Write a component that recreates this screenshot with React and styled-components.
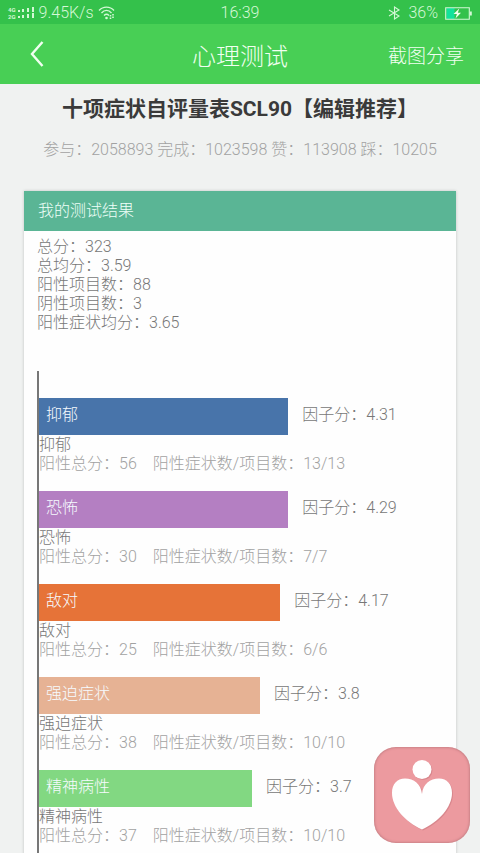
import styled, { createGlobalStyle } from 'styled-components';

const colors = {
  status: '#34c14b',
  header: '#48cf55',
  page: '#f0f2f1',
  card: '#fefefe',
  cardHead: '#5ab595',
  title: '#3a3a3a',
  text: '#777777',
  muted: '#a2a2a2',
  axis: '#777777',
  badge: '#ec9a9f',
};

const GlobalStyle = createGlobalStyle`
  * {
    box-sizing: border-box;
  }

  body {
    margin: 0;
    font-family: Roboto, 'Noto Sans CJK SC', sans-serif;
    font-size: 16px;
    font-weight: 300;
    background: ${colors.page};
    color: ${colors.text};
  }

  h1, h2, h3, p, ul {
    margin: 0;
    padding: 0;
  }
`;

const Screen = styled.div`
  display: flex;
  flex-direction: column;
  height: 100vh;
`;

const StatusBar = styled.div`
  display: grid;
  grid-template-columns: 1fr auto 1fr;
  align-items: center;
  height: 24px;
  flex: none;
  padding: 2px 8px 0;
  background: ${colors.status};
  color: #d4f8d6;
  line-height: 22px;
`;

const StatusGroup = styled.div`
  display: flex;
  align-items: center;
  justify-content: ${({ $end }) => ($end ? 'flex-end' : 'flex-start')};
  gap: ${({ $end }) => ($end ? '7px' : '4px')};
`;

const NetLabel = styled.span`
  display: flex;
  flex-direction: column;
  font-size: 6px;
  font-weight: 700;
  line-height: 7px;
`;

const Network = styled.div`
  display: flex;
  align-items: center;
  gap: 2px;
`;

const AppBar = styled.header`
  display: grid;
  grid-template-columns: 1fr auto 1fr;
  align-items: center;
  height: 60px;
  flex: none;
  padding: 0 16px;
  background: ${colors.header};
  color: #f1fff1;
`;

const BarButton = styled.button`
  display: flex;
  align-items: center;
  justify-self: ${({ $end }) => ($end ? 'end' : 'start')};
  padding: ${({ $end }) => ($end ? '0' : '0 12px')};
  border: 0;
  background: none;
  color: inherit;
  font: inherit;
  font-size: 19px;
  cursor: pointer;
`;

const BarTitle = styled.h1`
  font-size: 24px;
  font-weight: 300;
`;

const Content = styled.main`
  flex: 1;
  min-height: 0;
  overflow-y: auto;
  scrollbar-width: none;
`;

const TestTitle = styled.h2`
  padding-top: 10px;
  font-size: 21px;
  font-weight: 700;
  line-height: 30px;
  text-align: center;
  white-space: nowrap;
  color: ${colors.title};
`;

const Stats = styled.p`
  margin: 15px 0 30px;
  line-height: 22px;
  text-align: center;
  white-space: nowrap;
  color: ${colors.muted};
`;

const Card = styled.section`
  margin: 0 24px 24px;
  background: ${colors.card};
  box-shadow: 0 0 3px rgba(0, 0, 0, 0.2);
`;

const CardHead = styled.h3`
  padding: 0 14px;
  background: ${colors.cardHead};
  color: #effff8;
  font-size: 16px;
  font-weight: 300;
  line-height: 40px;
`;

const CardBody = styled.div`
  padding: 6px 15px 14px 13px;
`;

const Summary = styled.div`
  line-height: 19px;
`;

const Chart = styled.ul`
  margin-top: 39px;
  padding-top: 27px;
  border-left: 2px solid ${colors.axis};
  list-style: none;
`;

const Factor = styled.li`
  padding-bottom: 18px;
  line-height: 19px;
`;

const FactorLine = styled.div`
  display: flex;
  gap: 14px;
  line-height: 33px;
`;

const FactorBar = styled.div`
  height: 37px;
  padding-left: 7px;
  background: ${({ $color }) => $color};
  color: #f6fbff;
`;

const Detail = styled.p`
  display: flex;
  gap: 16px;
  color: ${colors.muted};
`;

const FloatingButton = styled.button`
  position: fixed;
  right: 10px;
  bottom: 10px;
  width: 96px;
  height: 96px;
  padding: 0;
  border: 0;
  border-radius: 22px;
  background: ${colors.badge};
  box-shadow: inset 0 0 3px #a96b70;
  cursor: pointer;
`;

const summary = [
  ['总分', '323'],
  ['总均分', '3.59'],
  ['阳性项目数', '88'],
  ['阴性项目数', '3'],
  ['阳性症状均分', '3.65'],
];

const factors = [
  { name: '抑郁', score: '4.31', width: 62, total: 56, items: '13/13', color: '#4874aa' },
  { name: '恐怖', score: '4.29', width: 62, total: 30, items: '7/7', color: '#b47fc2' },
  { name: '敌对', score: '4.17', width: 60, total: 25, items: '6/6', color: '#e67338' },
  { name: '强迫症状', score: '3.8', width: 55, total: 38, items: '10/10', color: '#e6b294' },
  { name: '精神病性', score: '3.7', width: 53, total: 37, items: '10/10', color: '#82d882' },
];

const SignalIcon = () => (
  <svg width="17" height="12" viewBox="0 0 17 12" fill="currentColor">
    <path d="M0 3h2v2H0zM0 9h2v2H0zM4 2h2v3H4zM4 8h2v3H4zM9 1h2v4H9zM9 7h2v4H9zM14 0h2v5h-2zM14 6h2v5h-2z" />
  </svg>
);

const WifiIcon = () => (
  <svg width="17" height="14" viewBox="0 0 17 14" fill="none" stroke="currentColor" strokeWidth="1.3">
    <path d="M1 4.5C5-.1 12-.1 16 4.5M3.5 7c3-3.4 7-3.4 10 0M6 9.5c1.6-1.6 3.4-1.6 5 0" />
    <circle cx="8.5" cy="12" r="1.3" fill="currentColor" stroke="none" />
    <path d="M12.5 9v4M15 8v4" strokeWidth="1.6" strokeDasharray="1.6 .8" />
  </svg>
);

const BluetoothIcon = () => (
  <svg width="13" height="14" viewBox="0 0 13 14" fill="none" stroke="currentColor" strokeWidth="1.1">
    <path d="M1 4l10 6-4.500 3V1L11 4 1 10" />
  </svg>
);

const BatteryIcon = () => (
  <svg width="27" height="13" viewBox="0 0 27 13">
    <path d="M1.5 1h8v11h-8z" fill="#12e29b" />
    <path d="M.7.7h23.6v11.6H.7z" fill="none" stroke="currentColor" strokeWidth="1.1" />
    <path d="M24.8 4.500h2v4h-2z" fill="currentColor" />
    <path d="M14.3 1.5L8.5 7h3.4l-1.4 4.5L16 5.8h-3.2z" fill="#f0fff0" />
  </svg>
);

const BackIcon = () => (
  <svg width="16" height="28" viewBox="0 0 16 28" fill="none" stroke="currentColor" strokeWidth="2.4">
    <path d="M14.5 2L4 14l10.5 12" />
  </svg>
);

const HeartIcon = () => (
  <svg width="96" height="96" viewBox="0 0 96 96">
    <g fill="#c6747b" opacity=".5" transform="translate(1 1)">
      <circle cx="48" cy="22.5" r="9.5" />
      <path d="M48 47C47 37 40 31.500 31 31.500C23 31.500 18 37 18 46C18 60 31 75 48 82.500C65 75 78 60 78 46C78 37 73 31.500 65 31.500C56 31.500 49 37 48 47Z" />
    </g>
    <g fill="#fff">
      <circle cx="48" cy="22.5" r="9.5" />
      <path d="M48 47C47 37 40 31.500 31 31.500C23 31.500 18 37 18 46C18 60 31 75 48 82.500C65 75 78 60 78 46C78 37 73 31.500 65 31.500C56 31.500 49 37 48 47Z" />
    </g>
  </svg>
);

const App = () => {
  return (
    <>
      <GlobalStyle />
      <Screen>
        <StatusBar>
          <StatusGroup>
            <Network>
              <NetLabel>
                <span>4G</span>
                <span>2G</span>
              </NetLabel>
              <SignalIcon />
            </Network>
            <span>9.45K/s</span>
            <WifiIcon />
          </StatusGroup>
          <span>16:39</span>
          <StatusGroup $end>
            <BluetoothIcon />
            <span>36%</span>
            <BatteryIcon />
          </StatusGroup>
        </StatusBar>
        <AppBar>
          <BarButton aria-label="返回">
            <BackIcon />
          </BarButton>
          <BarTitle>心理测试</BarTitle>
          <BarButton $end>截图分享</BarButton>
        </AppBar>
        <Content>
          <TestTitle>十项症状自评量表SCL90【编辑推荐】</TestTitle>
          <Stats>参与：2058893 完成：1023598 赞：113908 踩：10205</Stats>
          <Card>
            <CardHead>我的测试结果</CardHead>
            <CardBody>
              <Summary>
                {summary.map(([label, value]) => (
                  <p key={label}>{label}：{value}</p>
                ))}
              </Summary>
              <Chart>
                {factors.map((factor) => (
                  <Factor key={factor.name}>
                    <FactorLine>
                      <FactorBar $color={factor.color} style={{ width: `${factor.width}%` }}>
                        {factor.name}
                      </FactorBar>
                      <span>因子分：{factor.score}</span>
                    </FactorLine>
                    <p>{factor.name}</p>
                    <Detail>
                      <span>阳性总分：{factor.total}</span>
                      <span>阳性症状数/项目数：{factor.items}</span>
                    </Detail>
                  </Factor>
                ))}
              </Chart>
            </CardBody>
          </Card>
        </Content>
        <FloatingButton aria-label="心理测试">
          <HeartIcon />
        </FloatingButton>
      </Screen>
    </>
  );
};

export default App;
